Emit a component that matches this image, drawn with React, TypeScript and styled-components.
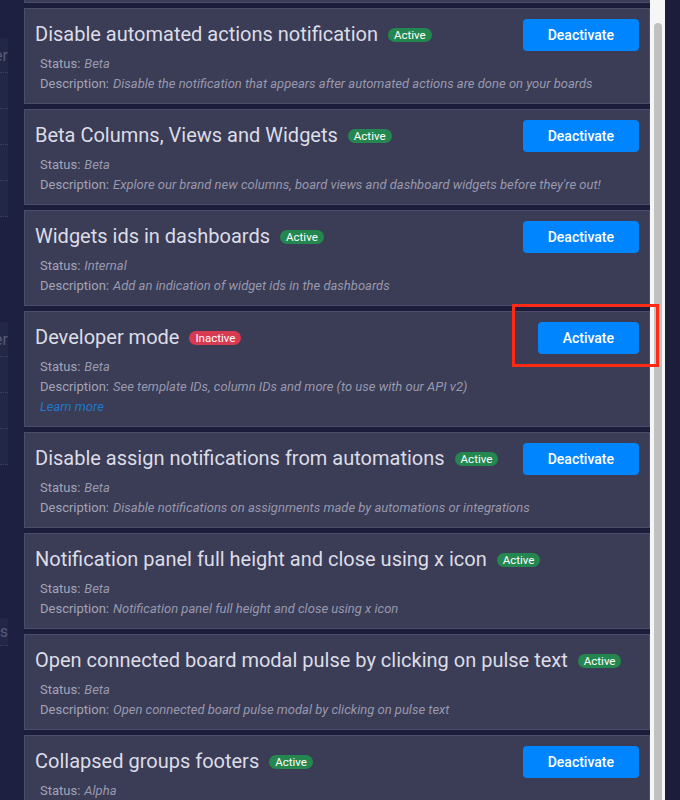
import React, { useLayoutEffect, useRef } from "react";
import styled, { createGlobalStyle } from "styled-components";

const Global = createGlobalStyle`
  html, body { margin: 0; padding: 0; background: #1b1d3a; }
  body { font-family: Roboto, "Noto Sans", "Liberation Sans", sans-serif; }
  * { box-sizing: border-box; }
`;

const Screen = styled.div`
  position: relative;
  display: flex;
  width: 680px;
  height: 800px;
  overflow: hidden;
  background: #1b1d3a;
`;

const BackdropStrip = styled.div`
  width: 24px;
  flex: none;
  display: flex;
  flex-direction: column;
  background: #1d2041;
`;

const GhostPanel = styled.div<{ $top: number }>`
  margin-top: ${(p) => p.$top}px;
  width: 8px;
  display: flex;
  flex-direction: column;
  background: #232746;
  overflow: hidden;
`;

const GhostRow = styled.div<{ $h: number }>`
  height: ${(p) => p.$h}px;
  border-bottom: 1px dotted #3a3e5e;
  display: flex;
  justify-content: flex-end;
  align-items: center;
  font-size: 16px;
  color: #565a7a;
  white-space: nowrap;
`;

const ListViewport = styled.div`
  width: 626px;
  flex: none;
  height: 800px;
  overflow: hidden;
`;

const List = styled.div`
  display: flex;
  flex-direction: column;
  gap: 5px;
  padding-bottom: 40px;
`;

const Card = styled.div`
  background: #3b3c55;
  border: 1px solid #4b4d6a;
  padding: 10px 10px 9px 10px;
  display: flex;
  flex-direction: column;
`;

const HeaderRow = styled.div`
  display: flex;
  align-items: center;
  justify-content: space-between;
  min-height: 32px;
  margin-bottom: 3px;
`;

const TitleWrap = styled.div`
  display: flex;
  align-items: center;
  gap: 10px;
  min-width: 0;
`;

const Title = styled.h3`
  margin: 0 0 2px 0;
  font-size: 20px;
  font-weight: 400;
  line-height: 24px;
  color: #dcdde7;
  white-space: nowrap;
`;

const Badge = styled.span<{ $active: boolean }>`
  display: inline-flex;
  align-items: center;
  height: 14px;
  padding: 0 6px;
  border-radius: 7px;
  font-size: 11.5px;
  line-height: 14px;
  color: #ffffff;
  background: ${(p) => (p.$active ? "#258750" : "#d83a52")};
`;

const ActionButton = styled.button`
  flex: none;
  height: 32px;
  padding: 0 25px;
  border: none;
  border-radius: 4px;
  background: #0085ff;
  color: #ffffff;
  font-family: inherit;
  font-size: 14px;
  font-weight: 500;
  cursor: pointer;
`;

const Details = styled.div`
  padding-left: 5px;
  display: flex;
  flex-direction: column;
`;

const Line = styled.div`
  font-size: 13px;
  line-height: 20px;
  color: #a3a4b8;
  white-space: nowrap;
  overflow: hidden;
`;

const Value = styled.span`
  font-style: italic;
  color: #9899ae;
  margin-left: 4px;
`;

const LearnMore = styled.a`
  font-size: 13px;
  line-height: 20px;
  font-style: italic;
  color: #1f78cc;
  text-decoration: none;
  cursor: pointer;
`;

const Scrollbar = styled.div`
  width: 15px;
  flex: none;
  height: 800px;
  background: #f6f6f8;
  padding: 23px 3px 0 4px;
  display: flex;
`;

const Thumb = styled.div`
  flex: 1;
  background: #c1c1c1;
  border-radius: 4px 4px 0 0;
`;

const Highlight = styled.div`
  position: absolute;
  left: 512px;
  top: 304px;
  width: 147px;
  height: 63px;
  border: 3px solid #ff2a14;
  pointer-events: none;
`;

type Feature = {
  title: string;
  active: boolean;
  status: string;
  description: string;
  button: boolean;
  learnMore?: boolean;
};

const features: Feature[] = [
  {
    title: "Item card view",
    active: true,
    status: "Beta",
    description: "Card view",
    button: true,
  },
  {
    title: "Disable automated actions notification",
    active: true,
    status: "Beta",
    description:
      "Disable the notification that appears after automated actions are done on your boards",
    button: true,
  },
  {
    title: "Beta Columns, Views and Widgets",
    active: true,
    status: "Beta",
    description:
      "Explore our brand new columns, board views and dashboard widgets before they're out!",
    button: true,
  },
  {
    title: "Widgets ids in dashboards",
    active: true,
    status: "Internal",
    description: "Add an indication of widget ids in the dashboards",
    button: true,
  },
  {
    title: "Developer mode",
    active: false,
    status: "Beta",
    description: "See template IDs, column IDs and more (to use with our API v2)",
    button: true,
    learnMore: true,
  },
  {
    title: "Disable assign notifications from automations",
    active: true,
    status: "Beta",
    description: "Disable notifications on assignments made by automations or integrations",
    button: true,
  },
  {
    title: "Notification panel full height and close using x icon",
    active: true,
    status: "Beta",
    description: "Notification panel full height and close using x icon",
    button: false,
  },
  {
    title: "Open connected board modal pulse by clicking on pulse text",
    active: true,
    status: "Beta",
    description: "Open connected board pulse modal by clicking on pulse text",
    button: false,
  },
  {
    title: "Collapsed groups footers",
    active: true,
    status: "Alpha",
    description: "Show group footers when a group is collapsed",
    button: true,
  },
];

function FeatureCard({ f }: { f: Feature }) {
  return (
    <Card>
      <HeaderRow>
        <TitleWrap>
          <Title>{f.title}</Title>
          <Badge $active={f.active}>{f.active ? "Active" : "Inactive"}</Badge>
        </TitleWrap>
        {f.button && <ActionButton>{f.active ? "Deactivate" : "Activate"}</ActionButton>}
      </HeaderRow>
      <Details>
        <Line>
          Status:<Value>{f.status}</Value>
        </Line>
        <Line>
          Description:<Value>{f.description}</Value>
        </Line>
        {f.learnMore && <LearnMore>Learn more</LearnMore>}
      </Details>
    </Card>
  );
}

export default function App() {
  const viewport = useRef<HTMLDivElement>(null);
  useLayoutEffect(() => {
    if (viewport.current) viewport.current.scrollTop = 93;
  }, []);

  return (
    <Screen>
      <Global />
      <BackdropStrip>
        <GhostPanel $top={38}>
          <GhostRow $h={35}>er</GhostRow>
          <GhostRow $h={36}></GhostRow>
          <GhostRow $h={36}></GhostRow>
          <GhostRow $h={36}></GhostRow>
          <GhostRow $h={36}></GhostRow>
        </GhostPanel>
        <GhostPanel $top={105}>
          <GhostRow $h={35}>er</GhostRow>
          <GhostRow $h={36}></GhostRow>
          <GhostRow $h={36}></GhostRow>
          <GhostRow $h={36}></GhostRow>
        </GhostPanel>
        <GhostPanel $top={153}>
          <GhostRow $h={28}>s</GhostRow>
        </GhostPanel>
      </BackdropStrip>
      <ListViewport ref={viewport}>
        <List>
          {features.map((f) => (
            <FeatureCard key={f.title} f={f} />
          ))}
        </List>
      </ListViewport>
      <Scrollbar>
        <Thumb />
      </Scrollbar>
      <Highlight />
    </Screen>
  );
}
